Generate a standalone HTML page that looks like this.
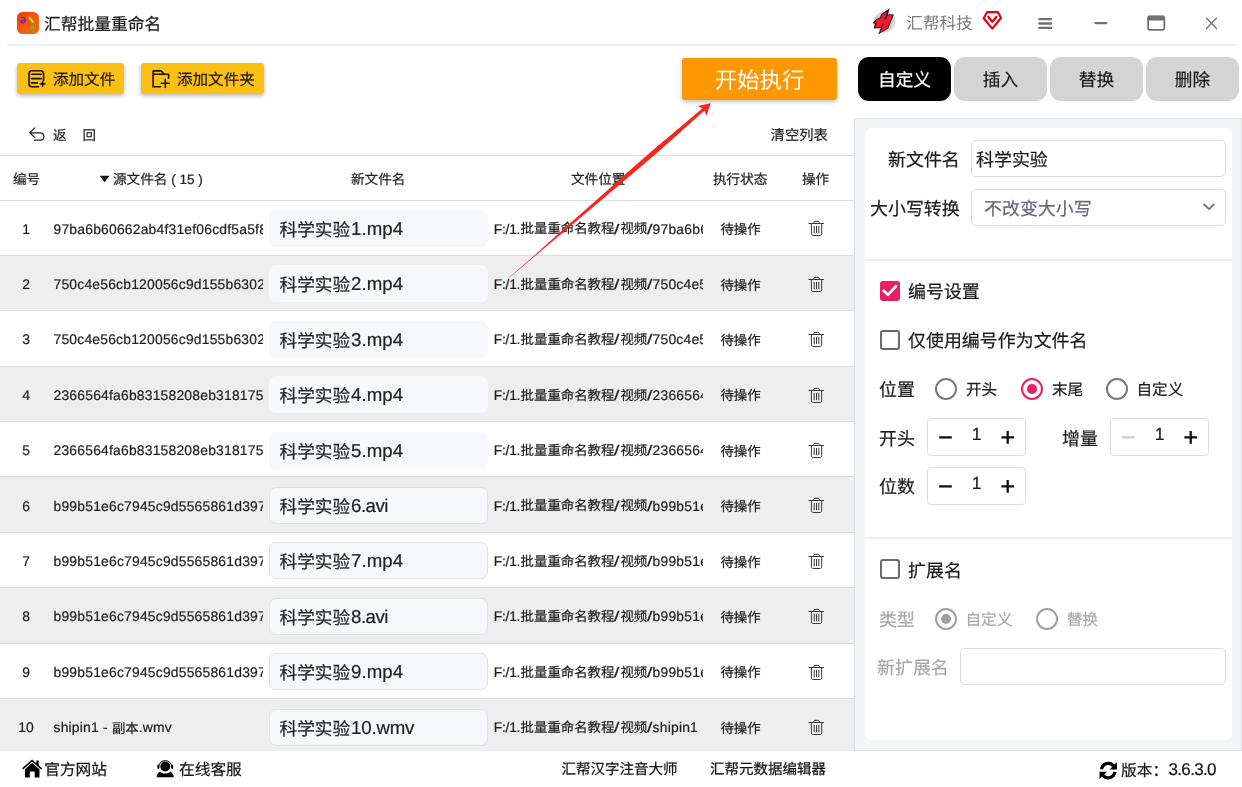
<!DOCTYPE html>
<html lang="zh-CN">
<head>
<meta charset="utf-8">
<title>汇帮批量重命名</title>
<style>
*{box-sizing:border-box;margin:0;padding:0}
html,body{width:1242px;height:787px;overflow:hidden;background:#fff}
body{font-family:"Liberation Sans",sans-serif;color:#222;font-size:13.33px;text-rendering:geometricPrecision;-webkit-text-stroke:.2px}
#app{will-change:transform;position:relative;width:1242px;height:787px;overflow:hidden;background:#fff}
.abs{position:absolute;white-space:nowrap}
.t{position:absolute;white-space:nowrap;line-height:1;transform:translateY(-41%)}
svg{position:absolute;overflow:visible}
/* title bar */
#appicon{left:17px;top:12px;width:22px;height:22px;border-radius:5px;background:linear-gradient(160deg,#f4431e 0%,#f46a10 60%,#f57c00 100%)}
#title{left:44px;top:23.5px;font-size:16.75px;color:#1a1a1a}
#sep{left:7px;top:44px;width:1229px;height:2px;background:#efefef}
#brand{left:906.3px;top:23px;font-size:16.6px;color:#7d7d7d}
/* toolbar */
.ybtn{position:absolute;top:63px;height:31px;border-radius:3px;background:#fcc015;box-shadow:0 2px 4px rgba(0,0,0,.28)}
.ybtn .t{top:16.3px;font-size:15.55px;color:#1a1a1a}
#start{left:682px;top:58px;width:155px;height:42px;border-radius:3px;background:#ff9800;box-shadow:0 2px 4px rgba(0,0,0,.25)}
#start .t{left:0;width:155px;text-align:center;top:21px;font-size:22.4px;color:#fff}
.tab{position:absolute;top:57px;width:93px;height:44px;border-radius:11px;background:#d4d4d4}
.tab .t{left:0;width:93px;text-align:center;top:22px;font-size:17.7px;color:#1a1a1a}
.tab.on{background:#000}.tab.on .t{color:#fff}
/* list header */
.hl{z-index:3;position:absolute;left:0;width:854px;height:1px;background:#dedede}
.th{font-size:13.6px;color:#222}
/* rows */
.row{position:absolute;left:0;width:854px;border-bottom:1px solid #dcdcdc;background:#fff}
.row.alt{background:#eeeeee}
.row i{font-style:normal;letter-spacing:0}
.row>span{position:absolute;white-space:nowrap;line-height:18px;top:19.3px;height:18px;overflow:hidden;font-size:13.9px;letter-spacing:.2px;color:#1c1c1c}
.row>span i{font-size:13.4px}
.c-no{left:0;width:52px;text-align:center;letter-spacing:0!important}
.c-src{left:53.5px;width:209.5px}
.c-new{left:269px;width:219px;top:9.5px!important;height:37px!important;border-radius:7px;background:#f7f8fc}
.row.brd .c-new{border:1px solid #dfe1e5}
.c-new span{position:absolute;white-space:nowrap;left:10.5px;top:7px;height:24px;line-height:24px;font-size:18.67px;letter-spacing:.05px;color:#222}
.c-new span i{font-size:17.65px;margin-right:1px;position:relative;top:1px}
.c-new span.avi{letter-spacing:-.55px}
.c-new span.wmv{letter-spacing:-.2px}
.row.brd .c-new span{left:9.5px;top:6px}
.c-path{left:490px;width:212.7px}
.c-path span,.c-path i{position:absolute;top:0;line-height:18px;white-space:nowrap}
.c-path i{top:.7px}
.c-src i{position:relative;top:.7px}
.p1{left:3.7px;letter-spacing:-.25px}
.p2{left:30.6px}
.p3{left:124px;transform:scaleX(1.4);transform-origin:0 0}
.p4{left:130.4px}
.p5{left:157px;transform:scaleX(1.4);transform-origin:0 0}
.p6{left:162.6px}
.c-st{left:700px;width:81px;top:20.8px!important;text-align:center;font-size:13.4px!important;letter-spacing:0!important}
.trash{left:808px;top:20px;width:16px;height:16px}
/* right panel */
.lb{font-size:17.95px;color:#1a1a1a}
.sm{font-size:15.6px;color:#1a1a1a}
.inp{position:absolute;border:1px solid #dcdcdc;border-radius:5px;background:#fff}
.cb{position:absolute;width:20px;height:20px;border:2px solid #6a6a6a;border-radius:3px;background:#fff}
.cb.on{border:0;background:#e91e63}
.rd{position:absolute;width:22px;height:22px;border:2px solid #7a7a7a;border-radius:50%;background:#fff}
.rd b{position:absolute;left:4px;top:4px;width:10px;height:10px;border-radius:50%;background:#e91e63}
.rd.on{border-color:#e91e63}
.rd.g{border-color:#a0a0a0}
.rd.gd{border-color:#a0a0a0}.rd.gd b{background:#a0a0a0}
.spin{position:absolute;width:99px;height:38px;border:1px solid #dedede;border-radius:4px;background:#fff}
.spin span{position:absolute;left:0;width:97px;text-align:center;top:5.2px;line-height:20px;font-size:17.5px;color:#1a1a1a}
.spin i{position:absolute;background:#111;border-radius:1px}
.spin .mi{left:12px;top:17px;width:12.600px;height:2px}
.spin .mi.dis{background:#cfcfcf}
.spin .ph{left:74.200px;top:17px;width:12.600px;height:2px}
.spin .pv{left:79.500px;top:11.700px;width:2px;height:12.600px}
.ft{font-size:15.7px;color:#111}
#start .t,#brand{-webkit-text-stroke:0}
i.k{display:inline-block;font-style:normal;white-space:nowrap;text-align:justify;text-align-last:justify;text-justify:inter-character}
.p2{width:7em;text-align:justify;text-align-last:justify;text-justify:inter-character}
.p4{width:2em;text-align:justify;text-align-last:justify;text-justify:inter-character}
</style>
</head>
<body>
<div id="app">
<div id="title" class="t"><i class="k" style="width:7em">汇帮批量重命名</i></div>
<div id="brand" class="t"><i class="k" style="width:4em">汇帮科技</i></div>
<div id="sep" class="abs"></div>
<div class="ybtn" style="left:17px;width:107px"><div class="t" style="left:36px"><i class="k" style="width:4em">添加文件</i></div></div>
<div class="ybtn" style="left:141px;width:123px"><div class="t" style="left:36px"><i class="k" style="width:5em">添加文件夹</i></div></div>
<div id="start" class="abs"><div class="t"><i class="k" style="width:4em">开始执行</i></div></div>
<div class="tab on" style="left:858px"><div class="t"><i class="k" style="width:3em">自定义</i></div></div>
<div class="tab" style="left:954px"><div class="t"><i class="k" style="width:2em">插入</i></div></div>
<div class="tab" style="left:1050px"><div class="t"><i class="k" style="width:2em">替换</i></div></div>
<div class="tab" style="left:1146px"><div class="t"><i class="k" style="width:2em">删除</i></div></div>
<div class="t" style="left:53px;top:135.3px;font-size:13.5px"><i class="k" style="width:1em">返</i></div>
<div class="t" style="left:82.6px;top:135.3px;font-size:13.5px"><i class="k" style="width:1em">回</i></div>
<div class="t" style="left:770.6px;top:135px;font-size:14.3px"><i class="k" style="width:4em">清空列表</i></div>
<div class="hl" style="top:155px"></div>
<div class="hl" style="top:200px"></div>
<div class="t th" style="left:13px;top:179.2px"><i class="k" style="width:2em">编号</i></div>
<div class="t th" style="left:113px;top:179.2px"><i class="k" style="width:4em">源文件名</i> ( 15 )</div>
<div class="t th" style="left:351px;top:179.2px"><i class="k" style="width:4em">新文件名</i></div>
<div class="t th" style="left:571px;top:179.2px"><i class="k" style="width:4em">文件位置</i></div>
<div class="t th" style="left:713px;top:179.2px"><i class="k" style="width:4em">执行状态</i></div>
<div class="t th" style="left:802px;top:179.2px"><i class="k" style="width:2em">操作</i></div>

<!-- app icon details -->
<svg style="left:17px;top:12px;width:22px;height:22px" viewBox="0 0 22 22"><defs><linearGradient id="ag" x1="0" y1="0" x2="1" y2="1"><stop offset="0" stop-color="#f0321c"/><stop offset=".45" stop-color="#f4570c"/><stop offset="1" stop-color="#f56a06"/></linearGradient></defs><rect x="0" y="0" width="22" height="22" rx="5.5" fill="url(#ag)"/><path d="M4.2 6.2c1.6-1.2 3.8-.8 3.8 1v3.6M8 8.4c-2.4-.2-4 .4-4 1.5c0 1.3 2.6 1.4 4-.1" fill="none" stroke="#7a2a9a" stroke-width="1.5"/><path d="M12.4 5.6L16 9.8" stroke="#c6f06a" stroke-width="1.8" stroke-linecap="round"/><path d="M15.2 12.2c-1 .8-2.2 3-2 5.4l4 .2c.3-2-.6-4.2-2-5.6z" fill="#5fc022"/></svg>
<!-- brand logo -->
<svg style="left:870px;top:6px;width:28px;height:30px" viewBox="870 6 28 30"><circle cx="884.8" cy="21.8" r="10.6" fill="#d3d6d6"/><path d="M889.63 8.35L881.24 13.94L879.97 17.24L875.65 19.53L872.61 23.34L874.89 23.85L873.62 28.42L880.74 27.91L878.20 34.52L888.36 28.42L893.95 14.45L889.88 14.20L887.85 14.70Z" fill="#33161a"/><path d="M887.60 11.40L882.16 14.70L880.99 17.85L876.67 20.09L874.64 22.73L876.77 23.14L875.15 27.41L881.24 26.90L883.17 22.07L884.90 17.50L886.33 14.20Z" fill="#ee1a32"/><path d="M888.97 15.31L892.52 15.31L887.60 27.66L879.97 32.74L882.16 27.30L883.78 23.60L885.92 19.28L887.60 15.62Z" fill="#ee1a32"/><path d="M883.02 19.17L886.58 19.17L884.90 23.75L881.35 23.75Z" fill="#ee1a32"/></svg>
<!-- vip -->
<svg style="left:980px;top:8px;width:26px;height:26px" viewBox="980 8 26 26"><path d="M987.2 12.05H997.9L1001 18L992.3 28.6L983.7 18.2Z" fill="none" stroke="#e60012" stroke-width="2.200" stroke-linejoin="round"/><path d="M988.4 16.9L992.3 21.7L996.3 16.9" fill="none" stroke="#e60012" stroke-width="2.300" stroke-linecap="round" stroke-linejoin="round"/></svg>
<!-- window buttons -->
<svg style="left:1036px;top:15px;width:18px;height:18px" viewBox="1036 15 18 18"><path d="M1039.3 19.1H1051.0M1039.3 23.5H1051.0M1039.3 27.9H1051.0" stroke="#707070" stroke-width="2.300" stroke-linecap="round"/></svg>
<svg style="left:1092px;top:15px;width:18px;height:18px" viewBox="1092 15 18 18"><path d="M1095.500 23.100H1106.200" stroke="#707070" stroke-width="2.300" stroke-linecap="round"/></svg>
<svg style="left:1145px;top:13px;width:22px;height:20px" viewBox="1145 13 22 20"><rect x="1148.100" y="16.500" width="16.200" height="13.300" rx="1.800" fill="none" stroke="#707070" stroke-width="1.800"/><rect x="1147.800" y="15.800" width="16.800" height="4.600" rx="1" fill="#707070"/></svg>
<svg style="left:1205px;top:17px;width:13px;height:13px" viewBox="0 0 13 13"><path d="M1.5 1.3L11.5 11.5M11.5 1.3L1.5 11.5" stroke="#757575" stroke-width="1.4" stroke-linecap="round"/></svg>
<!-- add file icon -->
<svg style="left:27px;top:69px;width:20px;height:20px" viewBox="27 69 20 20"><path d="M38.6 86.8H32c-1.8 0-3-1.2-3-3V73.7c0-1.8 1.2-3 3-3h8.600000000000001c1.8 0 3 1.2 3 3V80.6M31.4 74.2H41.4M31.4 78.6H41.4M31.4 82.9H37.5M42.6 81.6V86.2M40.3 83.9H44.9" fill="none" stroke="#1d1205" stroke-width="1.6" stroke-linecap="round" stroke-linejoin="round"/></svg>
<!-- add folder icon -->
<svg style="left:151px;top:69px;width:20px;height:20px" viewBox="151 69 20 20"><path d="M160.6 86.8H153.1V70.9H160.2c1 0 1.500 .3 2.1 1.100l1.700 2.200H168.600V78.300M153.400 74.200H163.800M165.300 79.200V87.400M161.300 83.300H169.300" fill="none" stroke="#1d1205" stroke-width="1.6" stroke-linecap="round" stroke-linejoin="round"/></svg>
<!-- back arrow -->
<svg style="left:28px;top:126px;width:18px;height:16px" viewBox="28 126 18 16"><path d="M34.900 127.900L29.700 132.800L34.900 137.600M29.900 132.800H40.200c2.200 0 3.700 1.500 3.700 3.650s-1.500 3.650 -3.700 3.650H34.200" fill="none" stroke="#222" stroke-width="1.2" stroke-linecap="round" stroke-linejoin="round"/></svg>
<!-- sort triangle -->
<svg style="left:99px;top:175px;width:12px;height:8px" viewBox="0 0 12 8"><path d="M0.700 0.800H10.500L5.600 7.200Z" fill="#111"/></svg>
<div id="table">
<div class="row" style="top:200.4px;height:55.4px"><span class="c-no">1</span><span class="c-src">97ba6b60662ab4f31ef06cdf5a5f8</span><span class="c-new"><span class="mp4"><i class="k" style="width:4em">科学实验</i>1.mp4</span></span><span class="c-path"><span class="p1">F:/1.</span><i class="p2">批量重命名教程</i><span class="p3">/</span><i class="p4">视频</i><span class="p5">/</span><span class="p6">97ba6b6</span></span><span class="c-st"><i class="k" style="width:3em">待操作</i></span><svg class="trash" viewBox="0 0 16 16"><path d="M0.9 3.5H15.6M5.800 3.300V2.500c0-.7.5-1.200 1.200-1.200h3.100c.7 0 1.200.5 1.200 1.200V3.300M3.400 3.700V13.700c0 1.100.7 1.800 1.800 1.800h6.700c1.100 0 1.800-.7 1.800-1.800V3.700M6.200 6.300V12.800M8.500 6.300V12.800M10.800 6.300V12.800" fill="none" stroke="#383838" stroke-width="1" stroke-linecap="round" stroke-linejoin="round"/></svg></div>
<div class="row alt" style="top:255.8px;height:55.4px"><span class="c-no">2</span><span class="c-src">750c4e56cb120056c9d155b6302</span><span class="c-new"><span class="mp4"><i class="k" style="width:4em">科学实验</i>2.mp4</span></span><span class="c-path"><span class="p1">F:/1.</span><i class="p2">批量重命名教程</i><span class="p3">/</span><i class="p4">视频</i><span class="p5">/</span><span class="p6">750c4e5</span></span><span class="c-st"><i class="k" style="width:3em">待操作</i></span><svg class="trash" viewBox="0 0 16 16"><path d="M0.9 3.5H15.6M5.800 3.300V2.500c0-.7.5-1.200 1.200-1.200h3.100c.7 0 1.200.5 1.200 1.200V3.300M3.400 3.700V13.700c0 1.100.7 1.800 1.800 1.800h6.700c1.100 0 1.800-.7 1.800-1.800V3.700M6.200 6.300V12.800M8.500 6.300V12.800M10.800 6.300V12.800" fill="none" stroke="#383838" stroke-width="1" stroke-linecap="round" stroke-linejoin="round"/></svg></div>
<div class="row" style="top:311.2px;height:55.4px"><span class="c-no">3</span><span class="c-src">750c4e56cb120056c9d155b6302</span><span class="c-new"><span class="mp4"><i class="k" style="width:4em">科学实验</i>3.mp4</span></span><span class="c-path"><span class="p1">F:/1.</span><i class="p2">批量重命名教程</i><span class="p3">/</span><i class="p4">视频</i><span class="p5">/</span><span class="p6">750c4e5</span></span><span class="c-st"><i class="k" style="width:3em">待操作</i></span><svg class="trash" viewBox="0 0 16 16"><path d="M0.9 3.5H15.6M5.800 3.300V2.500c0-.7.5-1.200 1.200-1.200h3.100c.7 0 1.200.5 1.200 1.200V3.300M3.400 3.700V13.700c0 1.100.7 1.800 1.800 1.800h6.700c1.100 0 1.800-.7 1.800-1.800V3.700M6.200 6.300V12.800M8.500 6.300V12.800M10.800 6.300V12.800" fill="none" stroke="#383838" stroke-width="1" stroke-linecap="round" stroke-linejoin="round"/></svg></div>
<div class="row alt" style="top:366.6px;height:55.4px"><span class="c-no">4</span><span class="c-src">2366564fa6b83158208eb318175</span><span class="c-new"><span class="mp4"><i class="k" style="width:4em">科学实验</i>4.mp4</span></span><span class="c-path"><span class="p1">F:/1.</span><i class="p2">批量重命名教程</i><span class="p3">/</span><i class="p4">视频</i><span class="p5">/</span><span class="p6">2366564</span></span><span class="c-st"><i class="k" style="width:3em">待操作</i></span><svg class="trash" viewBox="0 0 16 16"><path d="M0.9 3.5H15.6M5.800 3.300V2.500c0-.7.5-1.200 1.200-1.200h3.100c.7 0 1.200.5 1.200 1.200V3.300M3.400 3.700V13.700c0 1.100.7 1.800 1.800 1.800h6.700c1.100 0 1.800-.7 1.800-1.800V3.700M6.200 6.300V12.800M8.500 6.300V12.800M10.800 6.300V12.800" fill="none" stroke="#383838" stroke-width="1" stroke-linecap="round" stroke-linejoin="round"/></svg></div>
<div class="row" style="top:422.0px;height:55.4px"><span class="c-no">5</span><span class="c-src">2366564fa6b83158208eb318175</span><span class="c-new"><span class="mp4"><i class="k" style="width:4em">科学实验</i>5.mp4</span></span><span class="c-path"><span class="p1">F:/1.</span><i class="p2">批量重命名教程</i><span class="p3">/</span><i class="p4">视频</i><span class="p5">/</span><span class="p6">2366564</span></span><span class="c-st"><i class="k" style="width:3em">待操作</i></span><svg class="trash" viewBox="0 0 16 16"><path d="M0.9 3.5H15.6M5.800 3.300V2.500c0-.7.5-1.200 1.200-1.200h3.100c.7 0 1.200.5 1.200 1.200V3.300M3.400 3.700V13.700c0 1.100.7 1.800 1.800 1.800h6.700c1.100 0 1.800-.7 1.800-1.800V3.700M6.200 6.300V12.800M8.500 6.300V12.800M10.800 6.300V12.800" fill="none" stroke="#383838" stroke-width="1" stroke-linecap="round" stroke-linejoin="round"/></svg></div>
<div class="row alt brd" style="top:477.4px;height:55.4px"><span class="c-no">6</span><span class="c-src">b99b51e6c7945c9d5565861d397</span><span class="c-new"><span class="avi"><i class="k" style="width:4em">科学实验</i>6.avi</span></span><span class="c-path"><span class="p1">F:/1.</span><i class="p2">批量重命名教程</i><span class="p3">/</span><i class="p4">视频</i><span class="p5">/</span><span class="p6">b99b51e</span></span><span class="c-st"><i class="k" style="width:3em">待操作</i></span><svg class="trash" viewBox="0 0 16 16"><path d="M0.9 3.5H15.6M5.800 3.300V2.500c0-.7.5-1.200 1.200-1.200h3.100c.7 0 1.200.5 1.200 1.200V3.300M3.400 3.700V13.700c0 1.100.7 1.800 1.800 1.800h6.700c1.100 0 1.800-.7 1.800-1.800V3.700M6.200 6.300V12.800M8.500 6.300V12.800M10.800 6.300V12.800" fill="none" stroke="#383838" stroke-width="1" stroke-linecap="round" stroke-linejoin="round"/></svg></div>
<div class="row brd" style="top:532.8px;height:55.4px"><span class="c-no">7</span><span class="c-src">b99b51e6c7945c9d5565861d397</span><span class="c-new"><span class="mp4"><i class="k" style="width:4em">科学实验</i>7.mp4</span></span><span class="c-path"><span class="p1">F:/1.</span><i class="p2">批量重命名教程</i><span class="p3">/</span><i class="p4">视频</i><span class="p5">/</span><span class="p6">b99b51e</span></span><span class="c-st"><i class="k" style="width:3em">待操作</i></span><svg class="trash" viewBox="0 0 16 16"><path d="M0.9 3.5H15.6M5.800 3.300V2.500c0-.7.5-1.200 1.200-1.200h3.100c.7 0 1.200.5 1.200 1.200V3.300M3.400 3.700V13.700c0 1.100.7 1.800 1.800 1.800h6.700c1.100 0 1.800-.7 1.800-1.800V3.700M6.200 6.300V12.800M8.500 6.300V12.800M10.800 6.300V12.800" fill="none" stroke="#383838" stroke-width="1" stroke-linecap="round" stroke-linejoin="round"/></svg></div>
<div class="row alt brd" style="top:588.2px;height:55.4px"><span class="c-no">8</span><span class="c-src">b99b51e6c7945c9d5565861d397</span><span class="c-new"><span class="avi"><i class="k" style="width:4em">科学实验</i>8.avi</span></span><span class="c-path"><span class="p1">F:/1.</span><i class="p2">批量重命名教程</i><span class="p3">/</span><i class="p4">视频</i><span class="p5">/</span><span class="p6">b99b51e</span></span><span class="c-st"><i class="k" style="width:3em">待操作</i></span><svg class="trash" viewBox="0 0 16 16"><path d="M0.9 3.5H15.6M5.800 3.300V2.500c0-.7.5-1.200 1.200-1.200h3.100c.7 0 1.200.5 1.200 1.200V3.300M3.400 3.700V13.700c0 1.100.7 1.800 1.800 1.800h6.700c1.100 0 1.800-.7 1.800-1.800V3.700M6.200 6.300V12.800M8.500 6.300V12.800M10.800 6.300V12.800" fill="none" stroke="#383838" stroke-width="1" stroke-linecap="round" stroke-linejoin="round"/></svg></div>
<div class="row brd" style="top:643.6px;height:55.4px"><span class="c-no">9</span><span class="c-src">b99b51e6c7945c9d5565861d397</span><span class="c-new"><span class="mp4"><i class="k" style="width:4em">科学实验</i>9.mp4</span></span><span class="c-path"><span class="p1">F:/1.</span><i class="p2">批量重命名教程</i><span class="p3">/</span><i class="p4">视频</i><span class="p5">/</span><span class="p6">b99b51e</span></span><span class="c-st"><i class="k" style="width:3em">待操作</i></span><svg class="trash" viewBox="0 0 16 16"><path d="M0.9 3.5H15.6M5.800 3.300V2.500c0-.7.5-1.200 1.200-1.200h3.100c.7 0 1.200.5 1.200 1.200V3.300M3.400 3.700V13.700c0 1.100.7 1.800 1.800 1.800h6.700c1.100 0 1.800-.7 1.800-1.800V3.700M6.200 6.300V12.800M8.500 6.300V12.800M10.800 6.300V12.800" fill="none" stroke="#383838" stroke-width="1" stroke-linecap="round" stroke-linejoin="round"/></svg></div>
<div class="row alt brd" style="top:699.0px;height:55.4px"><span class="c-no">10</span><span class="c-src">shipin1 - <i class="k" style="width:2em">副本</i>.wmv</span><span class="c-new"><span class="wmv"><i class="k" style="width:4em">科学实验</i>10.wmv</span></span><span class="c-path"><span class="p1">F:/1.</span><i class="p2">批量重命名教程</i><span class="p3">/</span><i class="p4">视频</i><span class="p5">/</span><span class="p6">shipin1</span></span><span class="c-st"><i class="k" style="width:3em">待操作</i></span><svg class="trash" viewBox="0 0 16 16"><path d="M0.9 3.5H15.6M5.800 3.300V2.500c0-.7.5-1.200 1.200-1.200h3.100c.7 0 1.200.5 1.200 1.200V3.300M3.400 3.700V13.700c0 1.100.7 1.800 1.800 1.800h6.700c1.100 0 1.800-.7 1.800-1.800V3.700M6.200 6.300V12.800M8.500 6.300V12.800M10.800 6.300V12.800" fill="none" stroke="#383838" stroke-width="1" stroke-linecap="round" stroke-linejoin="round"/></svg></div>
</div>
<div id="panel" class="abs" style="left:854px;top:118px;width:388px;height:633px;background:#f4f5f7;border:1px solid #e0e1e4"></div>
<div id="card" class="abs" style="left:865px;top:128px;width:367px;height:612px;background:#fff;border-radius:7px"></div>
<div class="abs" style="left:865px;top:259px;width:367px;height:2px;background:#ececec"></div>
<div class="abs" style="left:865px;top:537px;width:367px;height:2px;background:#ececec"></div>
<!-- section 1 -->
<div class="t lb" style="left:888px;top:159px"><i class="k" style="width:4em">新文件名</i></div>
<div class="inp" style="left:971px;top:140px;width:255px;height:37px"></div>
<div class="t lb" style="left:976px;top:159px"><i class="k" style="width:4em">科学实验</i></div>
<div class="t lb" style="left:870px;top:207.5px"><i class="k" style="width:5em">大小写转换</i></div>
<div class="inp" style="left:971px;top:189px;width:255px;height:37px"></div>
<div class="t lb" style="left:984px;top:207.5px;color:#5f6b7a"><i class="k" style="width:6em">不改变大小写</i></div>
<svg style="left:1203px;top:203px;width:12px;height:8px" viewBox="0 0 12 8"><path d="M1.2 1.5L6 6.2L10.8 1.5" fill="none" stroke="#777" stroke-width="1.8" stroke-linecap="round" stroke-linejoin="round"/></svg>
<!-- section 2 -->
<div class="cb on" style="left:880px;top:280.5px"><svg viewBox="0 0 20 20" style="left:0;top:0;width:20px;height:20px"><path d="M3.700 9.800L8 13.800L16 5.200" fill="none" stroke="#fff" stroke-width="2.700" stroke-linecap="round" stroke-linejoin="round"/></svg></div>
<div class="t lb" style="left:908px;top:290.5px"><i class="k" style="width:4em">编号设置</i></div>
<div class="cb" style="left:880px;top:329.5px"></div>
<div class="t lb" style="left:908px;top:339.5px"><i class="k" style="width:10em">仅使用编号作为文件名</i></div>
<div class="t lb" style="left:879px;top:388.5px"><i class="k" style="width:2em">位置</i></div>
<div class="rd" style="left:935px;top:377.5px"></div>
<div class="t sm" style="left:966px;top:388.5px"><i class="k" style="width:2em">开头</i></div>
<div class="rd on" style="left:1021px;top:377.5px"><b></b></div>
<div class="t sm" style="left:1052px;top:388.5px"><i class="k" style="width:2em">末尾</i></div>
<div class="rd" style="left:1106px;top:377.5px"></div>
<div class="t sm" style="left:1136.5px;top:388.5px"><i class="k" style="width:3em">自定义</i></div>
<div class="t lb" style="left:879px;top:437.5px"><i class="k" style="width:2em">开头</i></div>
<div class="spin" style="left:927px;top:418px"><svg style="left:0;top:0;width:97px;height:36px" viewBox="0 0 97 36"><path d="M11.200 18.400H23.800" stroke="#111" stroke-width="2.300"/><path d="M73.400 18.400H86M79.700 12.100V24.700" stroke="#111" stroke-width="2.300"/></svg><span>1</span></div>
<div class="t lb" style="left:1062px;top:437.5px"><i class="k" style="width:2em">增量</i></div>
<div class="spin" style="left:1110px;top:418px"><svg style="left:0;top:0;width:97px;height:36px" viewBox="0 0 97 36"><path d="M11.200 18.400H23.800" stroke="#cfcfcf" stroke-width="2.300"/><path d="M73.400 18.400H86M79.700 12.100V24.700" stroke="#111" stroke-width="2.300"/></svg><span>1</span></div>
<div class="t lb" style="left:879px;top:486px"><i class="k" style="width:2em">位数</i></div>
<div class="spin" style="left:927px;top:467px"><svg style="left:0;top:0;width:97px;height:36px" viewBox="0 0 97 36"><path d="M11.200 18.400H23.800" stroke="#111" stroke-width="2.300"/><path d="M73.400 18.400H86M79.700 12.100V24.700" stroke="#111" stroke-width="2.300"/></svg><span>1</span></div>
<!-- section 3 -->
<div class="cb" style="left:880px;top:559px"></div>
<div class="t lb" style="left:908px;top:569.5px"><i class="k" style="width:3em">扩展名</i></div>
<div class="t lb" style="left:879px;top:618.5px;color:#a9a9a9"><i class="k" style="width:2em">类型</i></div>
<div class="rd gd" style="left:935px;top:607.5px"><b></b></div>
<div class="t sm" style="left:965.5px;top:618.5px;color:#a9a9a9"><i class="k" style="width:3em">自定义</i></div>
<div class="rd g" style="left:1036px;top:607.5px"></div>
<div class="t sm" style="left:1067px;top:618.5px;color:#a9a9a9"><i class="k" style="width:2em">替换</i></div>
<div class="t lb" style="left:877px;top:667px;color:#a9a9a9"><i class="k" style="width:4em">新扩展名</i></div>
<div class="inp" style="left:960px;top:648px;width:266px;height:37px"></div>
<div id="footer" class="abs" style="left:0;top:751px;width:1242px;height:36px;background:#fff"></div>
<svg style="left:21px;top:758px;width:22px;height:21px" viewBox="21 758 22 21"><path d="M22.600 768.900L32.100 760.500L41.600 768.900" fill="none" stroke="#000" stroke-width="1.500"/><path d="M36.400 760.400H38.700V766.200L36.400 764.200Z" fill="#000"/><path d="M25 769.300L32.100 763L39.500 769.300V777.400H34.700V771.400H29.800V777.400H25Z" fill="#000"/></svg>
<div class="t ft" style="left:44.2px;top:768.6px"><i class="k" style="width:4em">官方网站</i></div>
<svg style="left:155px;top:758px;width:21px;height:21px" viewBox="155 758 21 21"><circle cx="165.200" cy="766.500" r="4.900" fill="#000"/><path d="M158.700 766.400a6.600 6.600 0 0 1 13.100 0" fill="none" stroke="#000" stroke-width="1"/><ellipse cx="158.400" cy="766.700" rx="1.100" ry="2.200" fill="#000"/><ellipse cx="172.100" cy="766.700" rx="1.100" ry="2.200" fill="#000"/><path d="M156.500 777.200c.4-2.800 1.700-4.700 3.500-5.800c2.600 2.700 7.800 2.700 10.400 0c1.800 1.100 3.100 3 3.500 5.800Z" fill="#000"/></svg>
<div class="t ft" style="left:179px;top:768.6px"><i class="k" style="width:4em">在线客服</i></div>
<div class="t ft" style="left:561.5px;top:768.6px;font-size:14.5px"><i class="k" style="width:8em">汇帮汉字注音大师</i></div>
<div class="t ft" style="left:710px;top:768.6px;font-size:14.5px"><i class="k" style="width:8em">汇帮元数据编辑器</i></div>
<svg style="left:1098px;top:760px;width:21px;height:21px" viewBox="1098 760 21 21"><path d="M1101.600 769.300a6.700 6.700 0 0 1 11.900 -3.300M1114.900 771.900a6.700 6.700 0 0 1 -11.900 3.300" fill="none" stroke="#000" stroke-width="3.300"/><path d="M1117 762.100V769.500H1109.600Z" fill="#000"/><path d="M1099.500 779.100V771.700H1106.900Z" fill="#000"/></svg>
<div class="t ft" style="left:1121px;top:768.6px"><i class="k" style="width:3em">版本：</i><span style="font-size:17px;letter-spacing:-.7px;margin-left:.5px;position:relative;top:-.8px">3.6.3.0</span></div>
<!-- red arrow -->
<svg style="left:500px;top:95px;width:220px;height:190px;z-index:9" viewBox="500 95 220 190"><path d="M509.2 277.5L534.2 255.4L566.8 226.3L597.6 199.0L620.6 178.5L639.8 161.4L655.3 148.0L675.0 131.4L690.7 118.2L702.5 108.2L697.6 106.0L710.7 103.2L706.4 115.9L704.6 110.6L693.0 120.8L677.7 134.6L658.5 151.6L642.9 165.1L623.3 181.6L599.7 201.5L568.3 228.0L534.9 256.1L509.4 277.7Z" fill="#f5261b"/></svg>
</div>
</body>
</html>
